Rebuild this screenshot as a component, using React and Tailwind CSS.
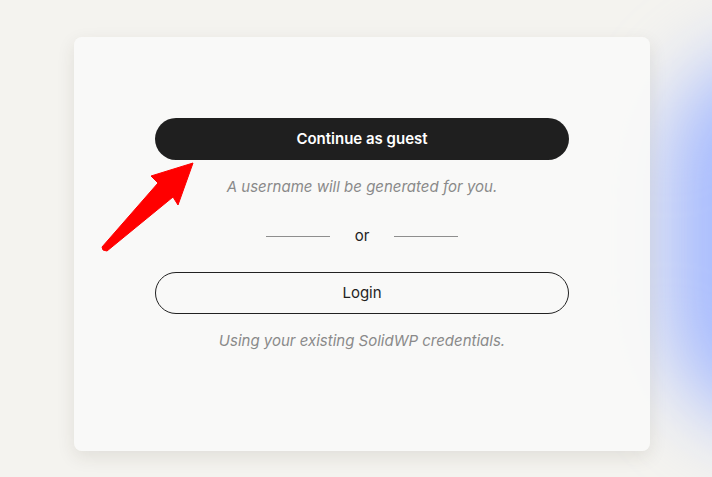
export default function App() {
  const font = { fontFamily: 'Inter, "Liberation Sans", sans-serif' };
  return (
    <div className="relative w-full h-[477px] overflow-hidden bg-[#f4f3ef]" style={font}>
      <div className="absolute left-[665px] top-[50px] w-[240px] h-[380px] rounded-full bg-[#a4b9ff] blur-[40px]" />
      <div className="relative pt-[37px] pl-[74px]">
        <div className="w-[576px] h-[414px] rounded-[8px] bg-[#fafaf8]/90 shadow-[0_6px_18px_rgba(60,50,30,0.10)] flex flex-col px-[81px] pt-[81px]">
          <button className="h-[42px] w-full rounded-full bg-[#1f1f1f] text-white text-[15px] font-semibold flex items-center justify-center">
            Continue as guest
          </button>
          <p className="mt-[17px] h-[20px] leading-[20px] text-center text-[15px] italic text-[#8a8a8a]">
            A username will be generated for you.
          </p>
          <div className="mt-[29px] h-[20px] flex items-center justify-center gap-[25px]">
            <div className="w-[64px] h-px bg-[#8e8e8e]" />
            <span className="text-[15px] leading-[20px] text-[#222]">or</span>
            <div className="w-[64px] h-px bg-[#8e8e8e]" />
          </div>
          <button className="mt-[26px] h-[42px] w-full rounded-full border border-[#222] text-[15px] text-[#1f1f1f] flex items-center justify-center">
            Login
          </button>
          <p className="mt-[17px] h-[20px] leading-[20px] text-center text-[15px] italic text-[#8a8a8a]">
            Using your existing SolidWP credentials.
          </p>
        </div>
      </div>
      <svg className="absolute left-0 top-0" width="712" height="477" viewBox="0 0 712 477">
        <polygon
          points="193,163 178,205 173,197 107,251 103,250 102,247 158,183 151,176"
          fill="#ff0000"
          stroke="#ff0000"
          strokeWidth="1"
          strokeLinejoin="round"
        />
      </svg>
    </div>
  );
}
